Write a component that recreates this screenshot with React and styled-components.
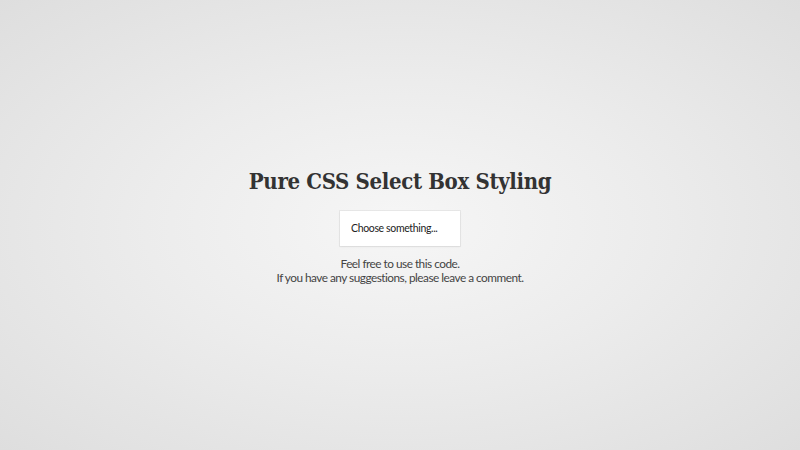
import React from "react";
import styled, { createGlobalStyle } from "styled-components";

const Global = createGlobalStyle`
  html, body { margin: 0; padding: 0; height: 100%; }
  body {
    background: radial-gradient(ellipse at center, #f6f6f6 0%, #ececec 45%, #dedede 100%);
    font-family: "Lato", "Open Sans", sans-serif;
    color: #444;
  }
  #root { height: 100%; }
`;

const Page = styled.main`
  box-sizing: border-box;
  height: 100vh;
  padding-top: 2px;
  display: flex;
  flex-direction: column;
  align-items: center;
  justify-content: center;
`;

const Title = styled.h1`
  margin: 0 0 17px;
  font-family: "DejaVu Serif Condensed", "DejaVu Serif", "Liberation Serif", serif;
  font-stretch: condensed;
  font-weight: bold;
  font-size: 22px;
  letter-spacing: -0.35px;
  color: #333;
`;

const SelectWrap = styled.div`
  width: 120px;
  height: 35px;
  background: #fff;
  box-shadow: 0 0 0 1px rgba(0, 0, 0, 0.05), 0 1px 2px rgba(0, 0, 0, 0.06);
  margin-bottom: 11px;
`;

const Select = styled.select`
  appearance: none;
  -webkit-appearance: none;
  border: 0;
  outline: 0;
  background: transparent;
  width: 100%;
  height: 100%;
  padding: 0 0 0 11px;
  font-family: "Lato", "Open Sans", sans-serif;
  font-size: 10.5px;
  letter-spacing: -0.35px;
  color: #222;
`;

const Note = styled.p`
  margin: 0;
  text-align: center;
  font-size: 11.8px;
  letter-spacing: -0.5px;
  line-height: 14px;
  color: #444;
`;

export default function App() {
  return (
    <>
      <Global />
      <Page>
        <Title>Pure CSS Select Box Styling</Title>
        <SelectWrap>
          <Select defaultValue="">
            <option value="" disabled>Choose something...</option>
            <option>Option 1</option>
            <option>Option 2</option>
          </Select>
        </SelectWrap>
        <Note>
          Feel free to use this code.
          <br />
          If you have any suggestions, please leave a comment.
        </Note>
      </Page>
    </>
  );
}
